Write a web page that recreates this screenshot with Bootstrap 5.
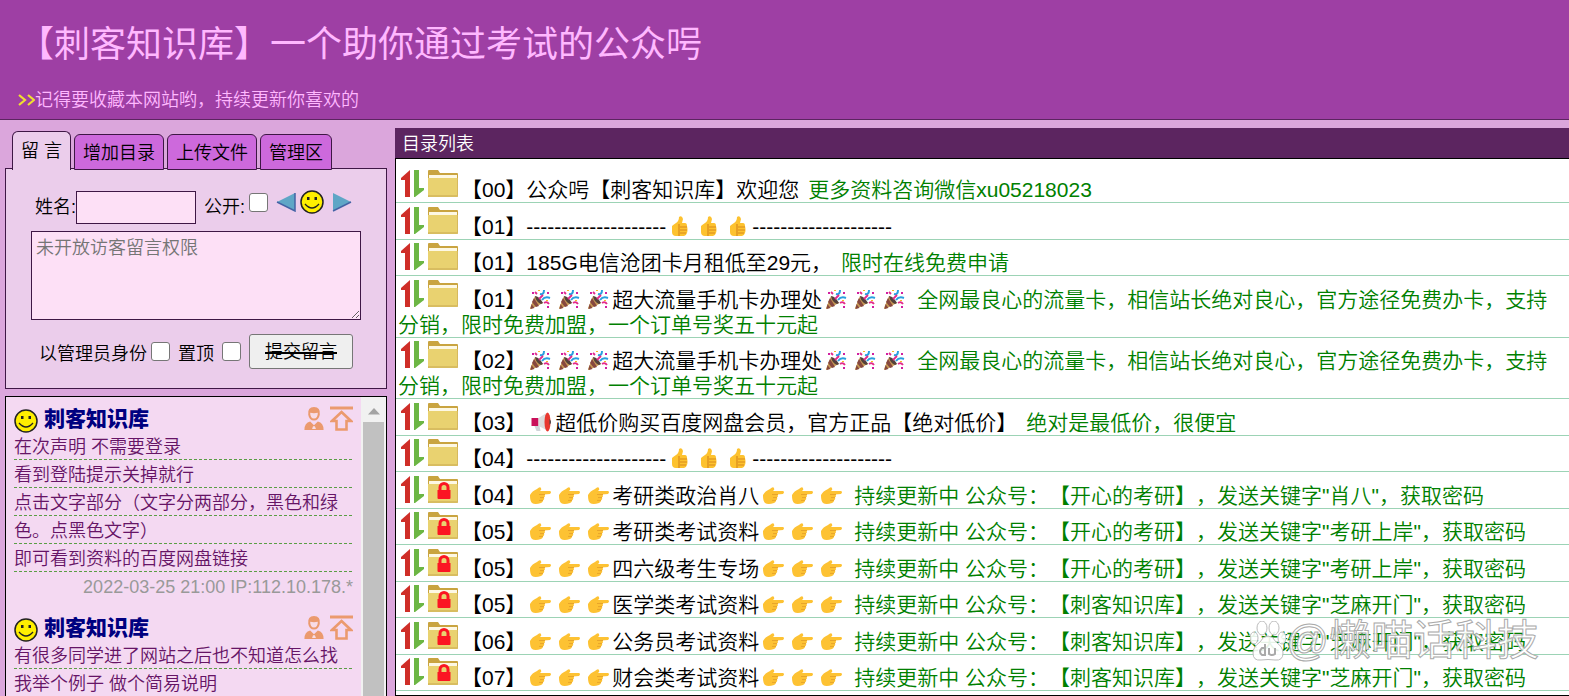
<!DOCTYPE html>
<html lang="zh-CN">
<head>
<meta charset="utf-8">
<meta name="viewport" content="width=device-width, initial-scale=1">
<title>【刺客知识库】</title>
<link href="https://cdn.jsdelivr.net/npm/bootstrap@5.3.0/dist/css/bootstrap.min.css" rel="stylesheet">
<style>
body{font-family:"Liberation Sans","Noto Sans CJK SC",sans-serif;font-size:18px;line-height:24px;font-weight:350;color:#000;background:#dba6dc;text-spacing-trim:space-all}
.site-head{background:#9e3fa4;border-bottom:1px solid #5c2560;color:#ffb8ff;height:120px;padding:21px 18px 0}
.site-head h1{font-size:36px;line-height:48px;font-weight:400;margin:0 0 19px}
.site-head svg{width:17px;height:12px}
.side-col{flex:0 0 395px;padding:11px 8px 0 5px}
.tabs-row{padding-left:7px;gap:3px;margin-bottom:-2px;position:relative}
.tab-btn{border:1px solid #3e1745;border-radius:6px 6px 0 0;background:#cd69dc;color:#000;font-weight:350;padding:0 8px;height:36px;line-height:36px}
.tab-btn.active{background:#ebcdeb;height:39px;border-bottom:0}
.form-box{border:1px solid #3e1745;background:#ebcdeb;height:221px;padding:21px 25px 0}
.field{border:1px solid #3e1745;border-radius:0;background:#fde0f6;color:#000;font-size:18px;font-weight:350}
.field::placeholder{color:#757575}
.name-field{width:120px;height:33px}
.msg-field{height:89px;padding:4px;line-height:25px;resize:both;width:330px;margin-top:7px}
.send-row{margin-top:14px}
.tick{appearance:none;width:19px;height:19px;border:1px solid #767676;border-radius:3px;background:#fff;margin:0}
.raised{margin-bottom:10px}
.send-btn{border:1px solid #767676;border-radius:3px;background:#efefef;width:104px;height:35px;font-weight:350;padding:0}
.send-btn s{text-decoration-thickness:2px}
.face{width:24px;height:24px}
.arrow{width:20px;height:20px}
.msg-box{border:1px solid #000;border-bottom:0;background:#f4d9f2;margin-top:7px}
.msg-list{padding:7px 8px 0}
.msg{margin-bottom:12px;color:#661466}
.msg header{height:29px;color:#000080;font-size:21px;font-weight:700;gap:6px}
.msg p{margin:0;line-height:28px;background:repeating-linear-gradient(90deg,#5a9e45 0 3px,transparent 3px 5px) 0 26px/100% 1px repeat-x}
.msg p.two{background:repeating-linear-gradient(90deg,#5a9e45 0 3px,transparent 3px 5px) 0 26px/100% 1px no-repeat,repeating-linear-gradient(90deg,#5a9e45 0 3px,transparent 3px 5px) 0 54px/100% 1px no-repeat}
.msg small{display:block;font-size:18px;line-height:28px;color:#999;text-align:right;font-weight:400}
.bar{flex:0 0 25px;background:#f1f1f1}
.bar i{display:block;margin-left:2px;width:21px}
.bar .up{height:25px;padding:11px 0 0 5px;line-height:0}
.bar .thumb{background:#c1c1c1}
.list-head{background:#5c2560;color:#fff;height:30px;line-height:32px;padding-left:7px}
.dir{border:1px solid #000;border-width:1px 0 1px 1px;background:#fff;padding-top:8px}
.dir li{font-size:21px;line-height:25px;padding:10px 4px 0 2px;border-bottom:1px solid #9cd3b5}
.dir li:nth-child(even){padding-top:11px}
.dir svg{vertical-align:baseline}
.ic{width:57px;height:27px;margin:-10px 0 0 3px}
.em{width:22px;height:21px;margin:-2px 3px -3px 4px}
.em3{width:80px;height:21px;margin:-2px 2px -3px 4px}
.dir a{color:#000;text-decoration:none;margin-left:3px}
.dir span{color:#008000;margin-left:3px}
.stamp{position:absolute;right:30px;bottom:32px;font-size:42px;line-height:46px;font-weight:400;color:#fffd;-webkit-text-stroke:1px #aaa;pointer-events:none}
</style>
</head>
<body class="vh-100 d-flex flex-column overflow-hidden position-relative">
<svg width="0" height="0" class="position-absolute" aria-hidden="true">
<defs>
<g id="sort"><path d="M9 0v27H4V10H0V8z" fill="#cf2e28"/><path d="M13 0h5v18h5v2l-9 7h-1z" fill="#6cb644"/></g>
<symbol id="folder" viewBox="0 0 57 27"><use href="#sort"/><g transform="translate(27)"><path d="M0 27V1q0-1 1-1h9l2 3h17q1 0 1 1v22z" fill="#c9a440"/><path d="M1 5h28v4H1z" fill="#fdf8e4"/><path d="M0 8h30v18q0 1-1 1H1q-1 0-1-1z" fill="#e9d270"/><path d="M0 26h30" stroke="#c8a850"/><path d="M29.500 8v18" stroke="#d6b95e"/></g></symbol>
<symbol id="locked" viewBox="0 0 57 27"><use href="#folder" width="57" height="27"/><g transform="translate(27)"><path d="M12 15v-3.500a4 4 0 0 1 8 0V15" fill="none" stroke="#fb1523" stroke-width="3"/><path d="M9.500 14h13v8q0 1-1 1h-11q-1 0-1-1z" fill="#fb1523"/></g></symbol>
<g id="one-party"><path d="M5 7l8 7-12 6q-1 0-1-1z" fill="#c79a55"/><path d="M4 9l5 8-3 1-4-5zM1.500 15l3 4-4 1z" fill="#86483f"/><path d="M5 7q4 0 8 7l-2 1Q6 13 5 7z" fill="#54413b"/><path d="M12 11q3-4 8-2" fill="none" stroke="#2a9fe0" stroke-width="2"/><path d="M10 5q4 1 4-4" fill="none" stroke="#2a9fe0" stroke-width="2"/><path d="M9 10l4-4M14 14q3-2 5 1M5 3l2 2" fill="none" stroke="#e32a8b" stroke-width="1.800"/><path d="M2 3h2v2H2zM17 3h2v2h-2zM17 17h2v2h-2z" fill="#d01fa0"/><path d="M8 1h2v1H8zM16 11h2v1h-2z" fill="#f7b928"/></g>
<g id="one-thumb"><path d="M2 10q1-1 4-3 3-2 3-6 3-2 4 2l-1 4h3q2 0 2 3 1 4 0 7-1 3-3 3H6q-4 0-4-4z" fill="#fdc22f"/><path d="M9 8v12M10 11h7M10 14h7M10 17h6" fill="none" stroke="#d98a1c" stroke-width="1.200"/></g>
<g id="one-point"><path d="M0 10q2-4 7-6 3-3 4-1 1 2-1 3h10q2 1 0 3l-6 .600q2 1.400 0 3 1 1.400-1 2.800 0 1.600-2 2.600-6 2-9 0-2-2-2-7z" fill="#fdc233"/><path d="M9 9.500h6M10 12.600h4M9 15.400h4" stroke="#e8a52a" fill="none"/></g>
<symbol id="party" viewBox="0 0 80 21"><use href="#one-party"/><use href="#one-party" x="29"/><use href="#one-party" x="58"/></symbol>
<symbol id="thumb" viewBox="0 0 80 21"><use href="#one-thumb"/><use href="#one-thumb" x="29"/><use href="#one-thumb" x="58"/></symbol>
<symbol id="point" viewBox="0 0 80 21"><use href="#one-point"/><use href="#one-point" x="29"/><use href="#one-point" x="58"/></symbol>
<symbol id="horn" viewBox="0 0 21 21"><path d="M1 6h7v8H1z" fill="#c9105a"/><path d="M8 6l8-5v17l-8-4z" fill="#dcdcdc"/><path d="M4 14h5l1 5H6z" fill="#cfd4d8"/><ellipse cx="17" cy="10" rx="3" ry="9.500" fill="#e8382f"/><path d="M19 7q3 3 0 6z" fill="#444"/></symbol>
<symbol id="smile" viewBox="0 0 24 24"><circle cx="12" cy="12" r="11" fill="#ffef00" stroke="#222" stroke-width="1.500"/><path d="M7 7h2.500v3H7zM14.500 7H17v3h-2.500z" fill="#222"/><path d="M5 14q7 8 14 0" fill="none" stroke="#222" stroke-width="1.400"/></symbol>
<symbol id="person" viewBox="0 0 20 24"><path d="M10 0q7 0 6 8-1 6-6 6T4 8Q3 0 10 0z" fill="#eb9a6e"/><path d="M6 6q4 1 8 0 0 6-4 6T6 6z" fill="#f8dce6"/><path d="M0 24q0-8 6-9l4 4 4-4q6 1 6 9z" fill="#eb9a6e"/><path d="M9 20h2l1 3H8z" fill="#f8dce6"/></symbol>
<symbol id="totop" viewBox="0 0 23 25"><path d="M0 2h23" stroke="#eb9a6e" stroke-width="3"/><path d="M11.500 6L21 15h-4.500v8.500h-10V15H2z" fill="none" stroke="#eb9a6e" stroke-width="2.600"/></symbol>
</defs>
</svg>

<header class="site-head flex-shrink-0">
<h1>【刺客知识库】一个助你通过考试的公众呺</h1>
<div class="d-flex align-items-center"><svg viewBox="0 0 17 12"><path d="M1 1l6 5-6 5M10 1l6 5-6 5" fill="none" stroke="#f0e030" stroke-width="2.200"/></svg>记得要收藏本网站哟，持续更新你喜欢的</div>
</header>

<div class="d-flex flex-grow-1" style="min-height:0">
<aside class="side-col d-flex flex-column">
<nav class="tabs-row d-flex align-items-end">
<button class="tab-btn active">留 言</button><button class="tab-btn">增加目录</button><button class="tab-btn">上传文件</button><button class="tab-btn">管理区</button>
</nav>
<form class="form-box flex-shrink-0">
<div class="d-flex align-items-center ps-1">
<label for="name">姓名:</label><input id="name" class="field name-field" type="text">
<label for="open" class="ms-2 me-1">公开:</label><input id="open" class="tick raised" type="checkbox">
<svg class="arrow raised ms-2 me-1" viewBox="0 0 20 20"><path d="M1 10L19 1v18z" fill="#5fa6c6"/><path d="M1 10l18 9V1" fill="none" stroke="#4463a5" stroke-width="1.500"/></svg>
<svg class="face raised"><use href="#smile"/></svg>
<svg class="arrow raised ms-2" viewBox="0 0 20 20"><path d="M19 10L1 1v18z" fill="#5fa6c6"/><path d="M1 19l18-9" fill="none" stroke="#4463a5" stroke-width="1.500"/></svg>
</div>
<textarea class="field msg-field d-block" aria-label="留言" placeholder="未开放访客留言权限"></textarea>
<div class="send-row d-flex align-items-center ps-1">
<label for="admin" class="ms-1 me-1 pt-1">以管理员身份</label><input id="admin" class="tick" type="checkbox">
<label for="pin" class="ms-2 me-2 pt-1">置顶</label><input id="pin" class="tick me-2" type="checkbox">
<button type="button" class="send-btn"><s>提交留言</s></button>
</div>
</form>
<section class="msg-box d-flex flex-grow-1 overflow-hidden" style="min-height:0">
<div class="msg-list flex-grow-1">
<article class="msg">
<header class="d-flex align-items-center"><svg class="face mt-1"><use href="#smile"/></svg><b>刺客知识库</b><svg class="ms-auto" width="20" height="23"><use href="#person"/></svg><svg width="23" height="25"><use href="#totop"/></svg></header>
<p>在次声明 不需要登录</p><p>看到登陆提示关掉就行</p><p class="two">点击文字部分（文字分两部分，黑色和绿色。点黑色文字）</p><p>即可看到资料的百度网盘链接</p>
<small>2022-03-25 21:00 IP:112.10.178.*</small>
</article>
<article class="msg">
<header class="d-flex align-items-center"><svg class="face mt-1"><use href="#smile"/></svg><b>刺客知识库</b><svg class="ms-auto" width="20" height="23"><use href="#person"/></svg><svg width="23" height="25"><use href="#totop"/></svg></header>
<p>有很多同学进了网站之后也不知道怎么找</p><p>我举个例子 做个简易说明</p>
</article>
</div>
<div class="bar d-flex flex-column"><i class="up"><svg width="12" height="7"><path d="M0 6.500L6 0l6 6.500z" fill="#a3a3a3"/></svg></i><i class="thumb flex-grow-1"></i></div>
</section>
</aside>

<main class="flex-grow-1 d-flex flex-column pt-2" style="min-width:0">
<div class="list-head flex-shrink-0">目录列表</div>
<ul class="dir list-unstyled m-0 flex-grow-1 overflow-hidden" style="min-height:0">
<li><svg class="ic"><use href="#folder"/></svg><a href="#">【00】公众呺【刺客知识库】欢迎您</a> <span>更多资料咨询微信xu05218023</span></li>
<li><svg class="ic"><use href="#folder"/></svg><a href="#">【01】--------------------<svg class="em3"><use href="#thumb"/></svg>--------------------</a></li>
<li><svg class="ic"><use href="#folder"/></svg><a href="#">【01】185G电信沧团卡月租低至29元，</a> <span>限时在线免费申请</span></li>
<li><svg class="ic"><use href="#folder"/></svg><a href="#">【01】<svg class="em3"><use href="#party"/></svg>超大流量手机卡办理处<svg class="em3"><use href="#party"/></svg></a> <span>全网最良心的流量卡，相信站长绝对良心，官方途径免费办卡，支持分销，限时免费加盟，一个订单号奖五十元起</span></li>
<li><svg class="ic"><use href="#folder"/></svg><a href="#">【02】<svg class="em3"><use href="#party"/></svg>超大流量手机卡办理处<svg class="em3"><use href="#party"/></svg></a> <span>全网最良心的流量卡，相信站长绝对良心，官方途径免费办卡，支持分销，限时免费加盟，一个订单号奖五十元起</span></li>
<li><svg class="ic"><use href="#folder"/></svg><a href="#">【03】<svg class="em"><use href="#horn"/></svg>超低价购买百度网盘会员，官方正品【绝对低价】</a> <span>绝对是最低价，很便宜</span></li>
<li><svg class="ic"><use href="#folder"/></svg><a href="#">【04】--------------------<svg class="em3"><use href="#thumb"/></svg>--------------------</a></li>
<li><svg class="ic"><use href="#locked"/></svg><a href="#">【04】<svg class="em3"><use href="#point"/></svg>考研类政治肖八<svg class="em3"><use href="#point"/></svg></a> <span>持续更新中 公众号：【开心的考研】，发送关键字"肖八"，获取密码</span></li>
<li><svg class="ic"><use href="#locked"/></svg><a href="#">【05】<svg class="em3"><use href="#point"/></svg>考研类考试资料<svg class="em3"><use href="#point"/></svg></a> <span>持续更新中 公众号：【开心的考研】，发送关键字"考研上岸"，获取密码</span></li>
<li><svg class="ic"><use href="#locked"/></svg><a href="#">【05】<svg class="em3"><use href="#point"/></svg>四六级考生专场<svg class="em3"><use href="#point"/></svg></a> <span>持续更新中 公众号：【开心的考研】，发送关键字"考研上岸"，获取密码</span></li>
<li><svg class="ic"><use href="#locked"/></svg><a href="#">【05】<svg class="em3"><use href="#point"/></svg>医学类考试资料<svg class="em3"><use href="#point"/></svg></a> <span>持续更新中 公众号：【刺客知识库】，发送关键字"芝麻开门"，获取密码</span></li>
<li><svg class="ic"><use href="#locked"/></svg><a href="#">【06】<svg class="em3"><use href="#point"/></svg>公务员考试资料<svg class="em3"><use href="#point"/></svg></a> <span>持续更新中 公众号：【刺客知识库】，发送关键字"芝麻开门"，获取密码</span></li>
<li><svg class="ic"><use href="#locked"/></svg><a href="#">【07】<svg class="em3"><use href="#point"/></svg>财会类考试资料<svg class="em3"><use href="#point"/></svg></a> <span>持续更新中 公众号：【刺客知识库】，发送关键字"芝麻开门"，获取密码</span></li>
</ul>
</main>
</div>
<div class="stamp d-flex align-items-center"><svg width="36" height="40" viewBox="0 0 36 40"><g fill="#fff" fill-opacity=".9" stroke="#bbb"><ellipse cx="12" cy="7" rx="5" ry="7"/><ellipse cx="24" cy="7" rx="5" ry="7"/><ellipse cx="4" cy="17" rx="4" ry="6"/><ellipse cx="32" cy="17" rx="4" ry="6"/><path d="M18 15q5 0 8 6 7 5 7 11 0 8-8 7-7-1-14 0-8 1-8-7 0-6 7-11 3-6 8-6z"/></g><path d="M15 23v11h-3q-4-3 0-7h3M19 27v6q3 2 6 0v-6" fill="none" stroke="#aaa" stroke-width="2"/></svg>@懒喵话科技</div>
<script src="https://cdn.jsdelivr.net/npm/bootstrap@5.3.0/dist/js/bootstrap.bundle.min.js"></script>
</body>
</html>
